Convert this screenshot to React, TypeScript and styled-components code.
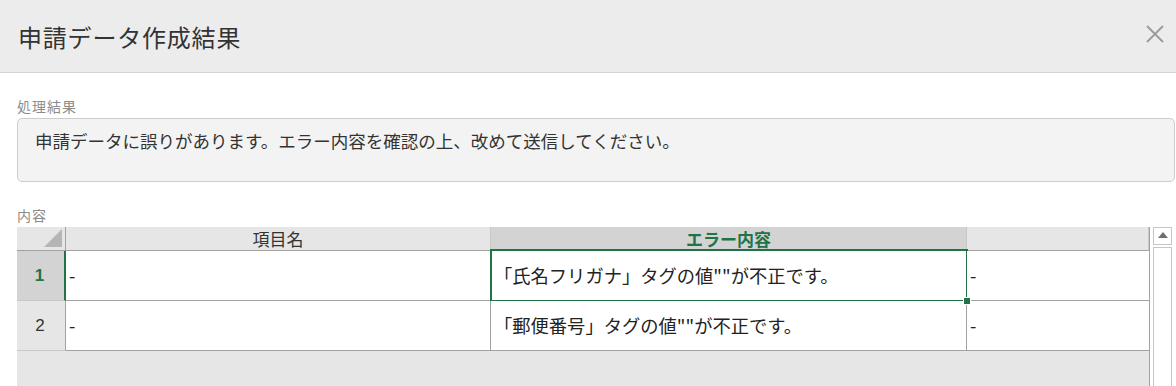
import React from "react";
import styled, { createGlobalStyle } from "styled-components";

const GREEN = "#217346";

const GlobalStyle = createGlobalStyle`
  html, body {
    margin: 0;
    padding: 0;
    background: #ffffff;
    overflow: hidden;
  }
  body {
    font-family: "Noto Sans CJK JP", "Noto Sans", sans-serif;
    color: #333333;
  }
`;

type Row = {
  no: number;
  item: string;
  error: string;
  note: string;
};

const ROWS: Row[] = [
  { no: 1, item: "-", error: "「氏名フリガナ」タグの値\"\"が不正です。", note: "-" },
  { no: 2, item: "-", error: "「郵便番号」タグの値\"\"が不正です。", note: "-" },
];

const SELECTED_ROW = 1;

export default function App() {
  return (
    <>
      <GlobalStyle />
      <StyledDialog>
        <StyledHeader>
          <StyledTitle>申請データ作成結果</StyledTitle>
          <StyledCloseButton aria-label="close">
            <svg width="20" height="20" viewBox="0 0 20 20">
              <path
                d="M2 2 L18 18 M18 2 L2 18"
                stroke="#9a9a9a"
                strokeWidth="1.8"
                fill="none"
              />
            </svg>
          </StyledCloseButton>
        </StyledHeader>

        <StyledBody>
          <StyledSection>
            <StyledLabel>処理結果</StyledLabel>
            <StyledResultBox>
              申請データに誤りがあります。エラー内容を確認の上、改めて送信してください。
            </StyledResultBox>
          </StyledSection>

          <StyledGrowSection>
            <StyledLabel>内容</StyledLabel>
            <StyledSheetArea>
              <StyledSheet>
                <StyledGrid>
                  <StyledCorner>
                    <svg width="18" height="18" viewBox="0 0 18 18">
                      <polygon points="18,0 18,18 0,18" fill="#b5b5b5" />
                    </svg>
                  </StyledCorner>
                  <StyledColHeader>項目名</StyledColHeader>
                  <StyledColHeader $active>エラー内容</StyledColHeader>
                  <StyledColHeader />

                  {ROWS.map((row) => {
                    const active = row.no === SELECTED_ROW;
                    return (
                      <React.Fragment key={row.no}>
                        <StyledRowHeader $active={active}>{row.no}</StyledRowHeader>
                        <StyledCell>{row.item}</StyledCell>
                        <StyledCell $selected={active}>
                          {row.error}
                          {active && <StyledFillHandle />}
                        </StyledCell>
                        <StyledCell>{row.note}</StyledCell>
                      </React.Fragment>
                    );
                  })}
                </StyledGrid>
              </StyledSheet>

              <StyledScrollbar>
                <StyledScrollButton>
                  <svg width="10" height="6" viewBox="0 0 10 6">
                    <polygon points="5,0 10,6 0,6" fill="#6f6f6f" />
                  </svg>
                </StyledScrollButton>
                <StyledScrollTrack />
              </StyledScrollbar>
            </StyledSheetArea>
          </StyledGrowSection>
        </StyledBody>
      </StyledDialog>
    </>
  );
}

const StyledDialog = styled.div`
  display: flex;
  flex-direction: column;
  width: 1176px;
  height: 386px;
  overflow: hidden;
`;

const StyledHeader = styled.header`
  display: flex;
  align-items: center;
  justify-content: space-between;
  height: 72px;
  padding: 0 9px 0 18px;
  background: #ececec;
  border-bottom: 1px solid #d3d3d3;
  flex-shrink: 0;
`;

const StyledTitle = styled.h1`
  margin: 0;
  font-size: 24px;
  font-weight: 400;
  color: #333333;
  letter-spacing: 0.8px;
`;

const StyledCloseButton = styled.button`
  display: flex;
  align-items: center;
  justify-content: center;
  width: 24px;
  height: 24px;
  padding: 0;
  margin-top: -4px;
  background: transparent;
  border: none;
  cursor: pointer;
`;

const StyledBody = styled.div`
  display: flex;
  flex-direction: column;
  flex: 1;
  min-height: 0;
  padding: 0 1px 0 17px;
`;

const StyledSection = styled.section`
  display: flex;
  flex-direction: column;
  margin-top: 23px;
`;

const StyledGrowSection = styled(StyledSection)`
  flex: 1;
  min-height: 0;
`;

const StyledLabel = styled.div`
  height: 20px;
  line-height: 20px;
  margin-bottom: 2px;
  font-size: 14px;
  color: #8c8c8c;
  letter-spacing: 1px;
`;

const StyledResultBox = styled.div`
  height: 64px;
  box-sizing: border-box;
  padding: 9px 17px;
  background: #f3f3f3;
  border: 1px solid #cdcdcd;
  border-radius: 5px;
  font-size: 17.5px;
  line-height: 26px;
  color: #333333;
`;

const StyledSheetArea = styled.div`
  display: flex;
  flex: 1;
  min-height: 0;
  gap: 3px;
  padding-right: 3px;
`;

const StyledSheet = styled.div`
  flex: 1;
  background: #e6e6e6;
  border-right: 1px solid #a2a2a2;
`;

const StyledGrid = styled.div`
  display: grid;
  grid-template-columns: 49px 425px 476px 1fr;
  grid-template-rows: 24px 50px 50px;
`;

const StyledCorner = styled.div`
  display: flex;
  align-items: flex-end;
  justify-content: flex-end;
  padding: 0 3px 3px 0;
  background: #e6e6e6;
  border-right: 1px solid #a2a2a2;
  border-bottom: 1px solid #a2a2a2;
`;

const StyledColHeader = styled.div<{ $active?: boolean }>`
  display: flex;
  align-items: center;
  justify-content: center;
  background: ${(p) => (p.$active ? "#d3d3d3" : "#e6e6e6")};
  color: ${(p) => (p.$active ? GREEN : "#333333")};
  font-weight: ${(p) => (p.$active ? 700 : 400)};
  font-size: 17px;
  border-right: 1px solid #c8c8c8;
  border-bottom: 1px solid ${(p) => (p.$active ? GREEN : "#a2a2a2")};

  &:last-child {
    border-right: none;
  }
`;

const StyledRowHeader = styled.div<{ $active?: boolean }>`
  display: flex;
  align-items: center;
  justify-content: center;
  padding-right: 2px;
  background: ${(p) => (p.$active ? "#d3d3d3" : "#e6e6e6")};
  color: ${(p) => (p.$active ? GREEN : "#333333")};
  font-family: "Liberation Sans", Arial, sans-serif;
  font-weight: ${(p) => (p.$active ? 700 : 400)};
  font-size: 17px;
  border-right: ${(p) => (p.$active ? `2px solid ${GREEN}` : "1px solid #a2a2a2")};
  border-bottom: 1px solid #c8c8c8;
`;

const StyledCell = styled.div<{ $selected?: boolean }>`
  position: relative;
  display: flex;
  align-items: center;
  padding: 0 4px 2px 3px;
  background: #ffffff;
  font-size: 18.3px;
  color: #222222;
  white-space: nowrap;
  border-right: 1px solid #a2a2a2;
  border-bottom: 1px solid #a2a2a2;

  &:nth-child(4n) {
    border-right: none;
  }

  ${(p) =>
    p.$selected &&
    `
    &::after {
      content: "";
      position: absolute;
      left: -1px;
      top: -2px;
      right: -2px;
      bottom: -2px;
      border: 2px solid ${GREEN};
      pointer-events: none;
    }
  `}
`;

const StyledFillHandle = styled.span`
  position: absolute;
  right: -5px;
  bottom: -5px;
  width: 6px;
  height: 6px;
  background: ${GREEN};
  border: 1px solid #ffffff;
  z-index: 1;
`;

const StyledScrollbar = styled.div`
  display: flex;
  flex-direction: column;
  width: 19px;
  gap: 2px;
`;

const StyledScrollButton = styled.div`
  display: flex;
  align-items: center;
  justify-content: center;
  height: 18px;
  box-sizing: border-box;
  padding-bottom: 2px;
  background: #ffffff;
  border: 1px solid #c6c6c6;
`;

const StyledScrollTrack = styled.div`
  flex: 1;
  background: #ffffff;
  border: 1px solid #c6c6c6;
  border-bottom: none;
`;
